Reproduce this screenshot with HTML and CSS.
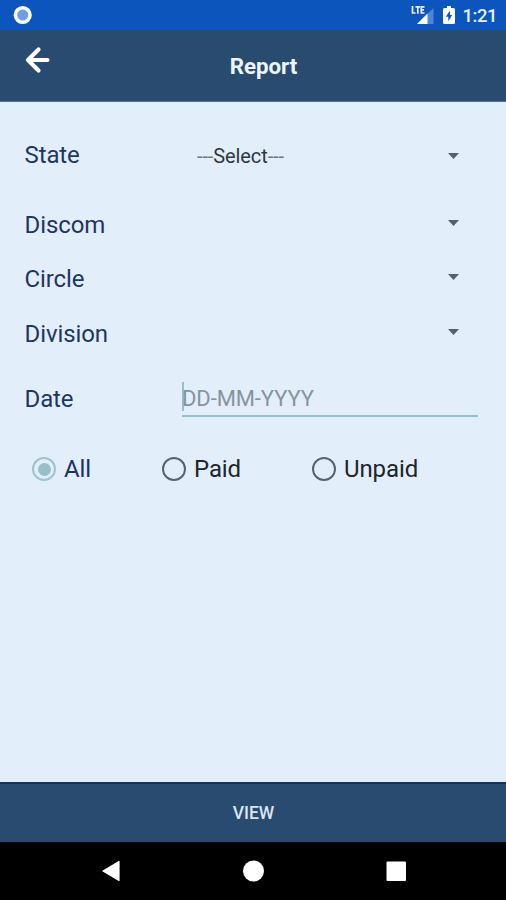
FILE: index.html
```
<!DOCTYPE html>
<html lang="en">
<head>
<meta charset="utf-8">
<title>Report</title>
<link rel="stylesheet" href="styles.css">
</head>
<body>
<div class="status">
  <svg class="status-dot" width="20" height="20" viewBox="0 0 20 20"><circle cx="9.7" cy="10" r="7.3" fill="#6f9fe0" stroke="#fff" stroke-width="3.6"/></svg>
  <div class="status-right">
    <svg class="signal" width="24" height="20" viewBox="0 0 24 20">
      <path d="M6 19 22.5 3V19Z" fill="#4f86d4"/>
      <path d="M6 19 16.5 8.5V19Z" fill="#fff"/>
      <path d="M1.5 1V8H4.5M4.5 1.8H9M6.8 1.8V8.8M13.5 1.8H10.3V8H13.5M10.3 4.9H13" fill="none" stroke="#e8f0ff" stroke-width="1.7"/>
    </svg>
    <svg class="battery" width="12" height="18" viewBox="0 0 12 18">
      <path d="M4 0H8V2H10.5Q12 2 12 3.5V16.5Q12 18 10.5 18H1.5Q0 18 0 16.5V3.5Q0 2 1.5 2H4Z" fill="#fff"/>
      <path d="M7 4.5 2.8 10.8H5.3V15.2L9.3 9H7Z" fill="#0b55bd"/>
    </svg>
    <span class="clock">1:21</span>
  </div>
</div>
<header class="header">
  <svg class="back" width="26" height="28" viewBox="0 0 26 28"><path d="M13.5 3.5 3 14 13.5 24.5M4 14H22.5" fill="none" stroke="#fff" stroke-width="4.2" stroke-linecap="round" stroke-linejoin="round"/></svg>
  <h1 class="title">Report</h1>
</header>
<main class="form">
  <div class="row row-state">
    <span class="label">State</span><span class="select"><span class="dashes">---</span>Select<span class="dashes">---</span></span>
    <svg class="caret" width="12" height="6" viewBox="0 0 12 6"><path d="M0 0H11L5.5 6Z"/></svg>
  </div>
  <div class="row">
    <span class="label">Discom</span>
    <svg class="caret caret-up" width="12" height="6" viewBox="0 0 12 6"><path d="M0 0H11L5.5 6Z"/></svg>
  </div>
  <div class="row">
    <span class="label">Circle</span>
    <svg class="caret caret-up" width="12" height="6" viewBox="0 0 12 6"><path d="M0 0H11L5.5 6Z"/></svg>
  </div>
  <div class="row row-division">
    <span class="label">Division</span>
    <svg class="caret caret-up" width="12" height="6" viewBox="0 0 12 6"><path d="M0 0H11L5.5 6Z"/></svg>
  </div>
  <div class="row row-date">
    <span class="label">Date</span>
    <div class="date"><span class="cursor"></span><span class="hint">DD-MM-YYYY</span></div>
  </div>
  <div class="radios">
    <div class="radio radio-on"><span class="ring"></span><span>All</span></div>
    <div class="radio"><span class="ring"></span><span>Paid</span></div>
    <div class="radio"><span class="ring"></span><span>Unpaid</span></div>
  </div>
</main>
<div class="view">VIEW</div>
<nav class="nav">
  <svg width="20" height="22" viewBox="0 0 20 22"><path d="M18 1.5V20.5L2 11Z" fill="#fff" stroke="#fff" stroke-width="1.2" stroke-linejoin="round"/></svg>
  <svg width="22" height="22" viewBox="0 0 22 22"><circle cx="11.5" cy="11" r="10.5" fill="#fff"/></svg>
  <svg width="22" height="22" viewBox="0 0 22 22"><rect x="1.5" y="1.5" width="19.5" height="19.5" rx="1" fill="#fff"/></svg>
</nav>
</body>
</html>
```
FILE: styles.css
```
* { box-sizing: border-box; }
body {
  margin: 0;
  width: 506px;
  height: 900px;
  display: flex;
  flex-direction: column;
  overflow: hidden;
  background: #e2eefa;
  font-family: Roboto, "Liberation Sans", sans-serif;
}
svg { display: block; flex: none; }
span { white-space: nowrap; }
.status {
  height: 30px;
  flex: none;
  display: flex;
  justify-content: space-between;
  align-items: center;
  padding: 0 9px 0 13px;
  background: #0b55bd;
}
.status-right { display: flex; align-items: center; }
.signal { margin-right: 8px; }
.battery { margin-right: 8px; }
.clock {
  padding-top: 2px;
  font-size: 18.5px;
  font-weight: 500;
  line-height: 30px;
  letter-spacing: -0.5px;
  color: #e8f1ff;
}
.header {
  height: 72px;
  flex: none;
  display: grid;
  grid-template-columns: 100px 1fr 100px;
  background: #294b6f;
  border-bottom: 1px solid #55718f;
}
.back { margin: 16px 0 0 25px; }
.title {
  margin: 1px 0 0 21px;
  justify-self: center;
  font-size: 22.3px;
  font-weight: 700;
  line-height: 71px;
  color: #edf5ff;
}
.form { flex: 1; padding-top: 10px; }
.row {
  height: 54px;
  display: flex;
  align-items: center;
  padding: 0 46px 0 24.5px;
}
.row-state { height: 86px; }
.row-division { height: 55px; }
.row-date { height: 75px; padding-right: 28px; }
.label {
  width: 157.5px;
  font-size: 24px;
  line-height: 28px;
  letter-spacing: -0.1px;
  color: #1f3663;
}
.select { margin: 2px 0 0 15px; font-size: 20px; letter-spacing: -0.1px; color: #30383f; }
.dashes { color: #6d7780; }
.caret { margin: 2px 0 0 auto; fill: #53616c; }
.caret-up { margin-top: -4px; }
.date {
  flex: 1;
  height: 36px;
  display: flex;
  align-items: center;
  border-bottom: 2px solid #94bfcb;
}
.cursor { width: 2px; height: 29px; margin: -3px -2px 0 0; background: #94bfcb; }
.hint { margin-top: 2px; font-size: 22px; letter-spacing: -0.1px; color: #87949d; }
.radios {
  height: 66px;
  display: grid;
  grid-template-columns: 130px 150px 1fr;
  padding-left: 32px;
}
.radio {
  display: flex;
  align-items: center;
  gap: 8px;
  font-size: 24px;
  letter-spacing: -0.1px;
  color: #20252b;
}
.ring {
  width: 24px;
  height: 24px;
  display: grid;
  place-items: center;
  border: 2px solid #59636c;
  border-radius: 50%;
}
.radio-on { color: #20306b; }
.radio-on .ring { border-color: #9fc4d0; }
.radio-on .ring::after {
  content: "";
  width: 13px;
  height: 13px;
  border-radius: 50%;
  background: #94bfcb;
}
.view {
  height: 60px;
  flex: none;
  padding-left: 1px;
  border-top: 2px solid #0e3464;
  background: #294b6f;
  color: #d9e6f5;
  font-size: 17.5px;
  font-weight: 500;
  line-height: 58px;
  text-align: center;
}
.nav {
  height: 58px;
  flex: none;
  display: flex;
  justify-content: space-between;
  align-items: center;
  padding: 0 99px 0 101px;
  background: #000;
}
```
